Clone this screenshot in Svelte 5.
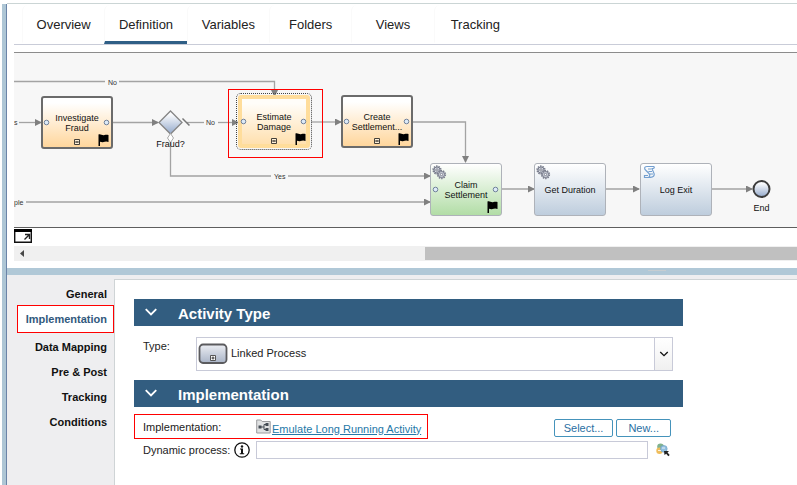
<script>
  const tabs = ['Overview', 'Definition', 'Variables', 'Folders', 'Views', 'Tracking'];
  const sections = ['General', 'Implementation', 'Data Mapping', 'Pre & Post', 'Tracking', 'Conditions'];

  let activeTab = $state('Definition');
  let activeSection = $state('Implementation');
  let dynamicProcess = $state('');

  // Positions are relative to the top left corner of the canvas.
  const nodes = [
    { x: 27, y: 43, kind: 'task', lines: ['Investigate', 'Fraud'], ports: true, sub: true, flag: true },
    { x: 224, y: 42, kind: 'task selected', lines: ['Estimate', 'Damage'], ports: true, sub: true, flag: true },
    { x: 327, y: 42, kind: 'task', lines: ['Create', 'Settlement...'], ports: true, sub: true, flag: true },
    { x: 416, y: 110, kind: 'claim', lines: ['Claim', 'Settlement'], ports: true, icon: 'gears', flag: true },
    { x: 520, y: 110, kind: 'system', lines: ['Get Duration'], icon: 'gears' },
    { x: 626, y: 110, kind: 'system', lines: ['Log Exit'], icon: 'script' }
  ];
</script>

{#snippet chevron(size)}
  <svg class="chevron" width={size} height={size} viewBox="0 0 12 12" aria-hidden="true">
    <path d="M1.500 3.500 6 8l4.500-4.500" fill="none" stroke="currentColor" stroke-width="1.600" />
  </svg>
{/snippet}

<div class="app">
  <div class="rail"></div>
  <div class="main">
    <div class="upper">
      <div class="tabstrip">
        <div class="tabs" role="tablist">
          {#each tabs as tab}
            <button class="tab" class:active={activeTab === tab} role="tab" aria-selected={activeTab === tab} onclick={() => (activeTab = tab)}>{tab}</button>
          {/each}
        </div>
      </div>

      <div class="canvas">
        <svg class="links" width="783" height="174" viewBox="14 53 783 174">
          <defs>
            <linearGradient id="steel" x1="0" y1="0" x2="0" y2="1">
              <stop offset="0.150" stop-color="#fafbfd" />
              <stop offset="1" stop-color="#93a9cb" />
            </linearGradient>
            <marker id="tip" viewBox="0 0 7 7" refX="6" refY="3.500" markerWidth="7" markerHeight="7" markerUnits="userSpaceOnUse" orient="auto">
              <path d="M0 0 7 3.500 0 7z" fill="#808080" />
            </marker>
          </defs>
          <g fill="none" stroke="#a3a3a3" stroke-width="1.300">
            <path d="M14 81.500H105" />
            <path d="M119 81.500H274.500V96" marker-end="url(#tip)" />
            <path d="M19 122.500H41" marker-end="url(#tip)" />
            <path d="M112 122.500H158" marker-end="url(#tip)" />
            <path d="M187 122.500H204" />
            <path d="M218 122.500H238" marker-end="url(#tip)" />
            <path d="M311 122H341" marker-end="url(#tip)" />
            <path d="M412 122H465.500V162" marker-end="url(#tip)" />
            <path d="M170.500 142V176H271" />
            <path d="M288 176H430" marker-end="url(#tip)" />
            <path d="M26 202H430" marker-end="url(#tip)" />
            <path d="M501 189H534" marker-end="url(#tip)" />
            <path d="M605 189H639" marker-end="url(#tip)" />
            <path d="M711 189H752" marker-end="url(#tip)" />
          </g>
          <path d="M182.500 118.500 189.500 125.500" stroke="#777" stroke-width="1.500" />
          <path d="M170.500 111 182 122.500 170.500 134 159 122.500z" fill="url(#steel)" stroke="#858585" stroke-width="1.300" />
          <path d="M170.500 133.500 173.500 138 170.500 142.500 167.500 138z" fill="#fff" stroke="#aaa" />
          <circle cx="761.500" cy="189" r="8" fill="url(#steel)" stroke="#3c3c3c" stroke-width="2" />
          <g class="small">
            <text x="108" y="85">No</text>
            <text x="206" y="125">No</text>
            <text x="274" y="179">Yes</text>
            <text x="14" y="205">ple</text>
            <text x="14" y="125">s</text>
          </g>
          <g class="caption">
            <text x="170.500" y="147">Fraud?</text>
            <text x="761.500" y="211">End</text>
          </g>
        </svg>

        {#each nodes as node}
          <div class="node {node.kind}" style="left: {node.x}px; top: {node.y}px">
            <span class="name">{#each node.lines as line}<span>{line}</span>{/each}</span>
            <svg class="marks" width="71" height="53" viewBox="0 0 71 53" aria-hidden="true">
              {#if node.ports}
                <circle cx="5.500" cy="26.500" r="2.300" fill="#dceaf8" stroke="#71819b" />
                <circle cx="65.500" cy="26.500" r="2.300" fill="#dceaf8" stroke="#71819b" />
              {/if}
              {#if node.sub}
                <path d="M33.500 43.500h5v5h-5z" fill="#fff0d8" stroke="#45413a" />
                <path d="M34 46h4M36 45v2" stroke="#45413a" />
              {/if}
              {#if node.flag}
                <path d="M57.500 38.500c2-1 4 1.500 6 .5 1.500-.5 2.500-.5 4 0v7c-2-1-3.500-.5-5 0-1.500.5-2.500-.3-3.500-.3V50h-1.500z" fill="#000" />
              {/if}
              {#if node.icon === 'gears'}
                <g fill="#d5d9e2" stroke="#7a7e8d">
                  <circle cx="7" cy="7" r="3.700" stroke-dasharray="1.400 0.900" stroke-width="1.900" />
                  <circle cx="7" cy="7" r="3" />
                  <circle cx="7" cy="7" r="1.200" fill="#fff" />
                  <circle cx="11.500" cy="11.500" r="3.700" stroke-dasharray="1.400 0.900" stroke-width="1.900" />
                  <circle cx="11.500" cy="11.500" r="3" />
                  <circle cx="11.500" cy="11.500" r="1.200" fill="#fff" />
                </g>
              {/if}
              {#if node.icon === 'script'}
                <path d="M14 3.500H7C4 3.500 4 6 6 7.500l3 3c1.500 1.500.5 4-1 4H4.500v-2H8M14 3.500c1 2-1 2-2 2 0 2 3 4 2 7-.5 1.500-2 2-6 2M8 6h3M8.500 8.500H12M10 11h3" fill="none" stroke="#739fd0" stroke-width="1.200" />
              {/if}
            </svg>
          </div>
        {/each}
        <div class="highlight"></div>
      </div>

      <button class="expand" aria-label="Open diagram in a window">
        <svg width="18" height="14" viewBox="0 0 18 14" aria-hidden="true">
          <path d="M.7.700h16.600v12.600H.7z" fill="#fff" stroke="#111" stroke-width="1.400" />
          <path d="M0 0h18v3H0z" fill="#000" />
          <path d="M10.500 10.500 15 6M11 5.500h4.500V10" fill="none" stroke="#222" stroke-width="1.400" />
        </svg>
      </button>

      <div class="scrollbar">
        <svg width="15" height="15" viewBox="0 0 15 15" aria-hidden="true"><path d="M10 4v7L6 7.500z" fill="#484848" /></svg>
        <div class="thumb"></div>
      </div>
    </div>

    <div class="splitter"><span></span></div>

    <div class="lower">
      <nav class="side">
        {#each sections as section}
          <button class:current={activeSection === section} onclick={() => (activeSection = section)}>{section}</button>
        {/each}
      </nav>

      <div class="panel">
        <div class="form">
          <h2>{@render chevron(14)}Activity Type</h2>
          <div class="row type">
            <label for="type">Type:</label>
            <div class="combo">
              <svg class="typeicon" width="30" height="22" viewBox="0 0 30 22" aria-hidden="true">
                <defs>
                  <linearGradient id="pill" x1="0" y1="0" x2="0" y2="1">
                    <stop offset="0" stop-color="#eceef3" />
                    <stop offset="1" stop-color="#a9b4c7" />
                  </linearGradient>
                </defs>
                <rect x="1.500" y="1.500" width="27" height="18.500" rx="3.500" fill="url(#pill)" stroke="#5b5b5e" stroke-width="1.800" />
                <path d="M12.500 12.500h5v5h-5z" fill="#fff" stroke="#555" />
                <path d="M13.500 15h3M15 13.500v3" stroke="#333" />
              </svg>
              <select id="type"><option>Linked Process</option></select>
              <span class="drop">{@render chevron(10)}</span>
            </div>
          </div>

          <h2>{@render chevron(14)}Implementation</h2>
          <div class="row impl">
            <div class="marked">
              <span class="label">Implementation:</span>
              <svg width="15" height="15" viewBox="0 0 15 15" aria-hidden="true">
                <path d="M.7 1h4l1.500 1.500h8V14H.7z" fill="#e0e2e3" stroke="#9a9c9e" />
                <path d="M4 8h4M11 5.500H8v5h3" fill="none" stroke="#444c55" />
                <path d="M2.500 6.500h3v3h-3zM9.500 4h3v3h-3zM9.500 9h3v3h-3z" fill="#444c55" />
              </svg>
              <a href="#activity">Emulate Long Running Activity</a>
            </div>
            <div class="actions">
              <button>Select...</button>
              <button>New...</button>
            </div>
          </div>

          <div class="row dynamic">
            <label for="dynamic">Dynamic process:</label>
            <svg width="16" height="16" viewBox="0 0 16 16" aria-hidden="true">
              <circle cx="8" cy="8" r="7.200" fill="#fff" stroke="#111" stroke-width="1.300" />
              <circle cx="8" cy="4.500" r="1.200" fill="#111" />
              <path d="M6 6.500h3v4.700h1.200v1H5.800v-1H7V7.500H6z" fill="#111" />
            </svg>
            <input id="dynamic" type="text" bind:value={dynamicProcess} />
            <button class="pick" aria-label="Pick a value">
              <svg width="14" height="14" viewBox="0 0 14 14" aria-hidden="true">
                <circle cx="4.500" cy="3.800" r="3.300" fill="#80b28e" />
                <circle cx="3.500" cy="7.800" r="3.200" fill="#efbd5b" />
                <circle cx="7.800" cy="5.800" r="3.400" fill="#91bfdf" stroke="#6097bd" stroke-width=".5" />
                <path d="M2 7.500h3M6 5h3" stroke="#fff" stroke-width=".8" />
                <path d="M8 8h5l-1.500 1.500 2.200 2.500-1.400 1.300-2.100-2.500L8.500 12z" fill="#222" />
              </svg>
            </button>
          </div>
        </div>
      </div>
    </div>
  </div>
</div>

<style>
  :global(body) {
    background: #fff;
  }
  .app, .app * {
    box-sizing: border-box;
  }
  .app {
    display: flex;
    min-height: 100vh;
    padding: 3px 0 0 2px;
    font-family: "Liberation Sans", Arial, sans-serif;
    font-size: 11px;
    line-height: 14px;
    color: #222;
  }
  button, select, input {
    font: inherit;
    color: inherit;
    margin: 0;
    padding: 0;
    border: 0;
    background: none;
  }
  svg {
    display: block;
    flex: none;
  }
  .rail {
    flex: none;
    width: 5px;
    margin-top: 1px;
    background: #aec6d5;
    border-right: 1px solid #6b84a8;
  }
  .main {
    flex: 1;
    min-width: 0;
    display: flex;
    flex-direction: column;
    border-top: 1px solid #cbd5d5;
  }
  .upper {
    padding: 1px 0 7px 7px;
  }

  /* Tabs */
  .tabstrip {
    height: 40px;
    margin-bottom: 7px;
    padding-left: 8px;
    border-bottom: 1px solid #c9ccd8;
  }
  .tabs {
    display: grid;
    grid-template-columns: repeat(6, 1fr);
    width: 100%;
    max-width: 494px;
    height: 39px;
  }
  .tab {
    padding-top: 3px;
    font-size: 13px;
    border-left: 1px solid #fafafa;
    border-bottom: 3px solid transparent;
    border-radius: 6px 6px 0 0;
  }
  .tab.active {
    border-bottom-color: #2f5f86;
    border-bottom-left-radius: 0;
  }

  /* Diagram */
  .canvas {
    position: relative;
    height: 176px;
    overflow: hidden;
    background: #f7f7f7;
    border-top: 1px solid #8c8c8c;
    border-bottom: 1px solid #5e5e5e;
  }
  .links {
    position: absolute;
    left: 0;
    top: 0;
  }
  .small {
    font-size: 7px;
    fill: #333;
  }
  .caption {
    font-size: 9px;
    fill: #111;
    text-anchor: middle;
  }
  .node {
    position: absolute;
    width: 72px;
    height: 53px;
    display: flex;
    align-items: center;
    justify-content: center;
    border: 1px solid #aeb2b9;
    border-radius: 3px;
    font-size: 9px;
    line-height: 10px;
    color: #111;
    text-align: center;
  }
  .name {
    display: flex;
    flex-direction: column;
  }
  .marks {
    position: absolute;
    left: -1px;
    top: -1px;
  }
  .task {
    border: 2px solid #6b6b6b;
    background: linear-gradient(#fff 10%, #ffd69c);
  }
  .task .marks {
    left: -2px;
    top: -2px;
  }
  .selected {
    border: 4px solid #ffdd9b;
    outline: 1px dotted #444;
    outline-offset: 1px;
    background: linear-gradient(#fffdf9 10%, #ffe0af) padding-box;
  }
  .selected .marks {
    left: -4px;
    top: -4px;
  }
  .claim {
    background: linear-gradient(#fff, #b2dda6);
  }
  .system {
    background: linear-gradient(#fff, #becddd);
  }
  .highlight {
    position: absolute;
    left: 214px;
    top: 36px;
    width: 95px;
    height: 69px;
    border: 1px solid #f00;
  }
  .expand {
    display: block;
    margin: 1px 0 3px;
  }

  .scrollbar {
    display: flex;
    align-items: center;
    height: 15px;
    background: #f0f0f0;
  }
  .thumb {
    flex: 1;
    height: 13px;
    margin-left: 396px;
    background: #c0c0c0;
  }
  .splitter {
    display: flex;
    justify-content: center;
    align-items: flex-start;
    height: 7px;
    padding: 2px 0 0 510px;
    background: #b0c8d7;
  }
  .splitter span {
    width: 18px;
    height: 1px;
    background: #c6cdd1;
  }

  /* Properties */
  .lower {
    flex: 1;
    display: flex;
    background: #eeeef0;
  }
  .side {
    flex: none;
    width: 107px;
    padding: 6px 0 0 10px;
    display: flex;
    flex-direction: column;
  }
  .side button {
    height: 25px;
    padding-right: 7px;
    text-align: right;
    font-weight: bold;
    color: #111;
  }
  .side .current {
    height: 28px;
    margin: -1px 0 1px;
    padding-right: 6px;
    color: #31597d;
    background: #fff;
    border: 1px solid #f00;
  }
  .panel {
    flex: 1;
    margin-top: 4px;
    padding: 19px 19px 0;
    background: #fff;
    border-top: 1px solid #cfd4d6;
    border-left: 1px solid #cfd4d6;
  }
  .form {
    max-width: 549px;
  }
  h2 {
    display: flex;
    align-items: center;
    gap: 20px;
    height: 27px;
    margin: 0;
    padding: 3px 0 0 10px;
    font-size: 15px;
    line-height: 20px;
    color: #fff;
    background: #325d80;
  }
  h2 .chevron {
    margin-top: -4px;
  }
  .row {
    display: flex;
    align-items: center;
  }
  .type {
    align-items: flex-start;
    padding: 11px 10px 9px 9px;
  }
  .type label {
    width: 53px;
    padding-top: 2px;
  }
  .combo {
    position: relative;
    flex: 1;
    height: 34px;
  }
  .combo select {
    display: block;
    width: 100%;
    height: 34px;
    padding: 0 22px 2px 34px;
    appearance: none;
    border: 1px solid #c8cad8;
    border-radius: 0;
    background: #fff;
  }
  .typeicon {
    position: absolute;
    left: 2px;
    top: 6px;
  }
  .drop {
    position: absolute;
    right: 1px;
    top: 1px;
    width: 18px;
    height: 32px;
    display: flex;
    align-items: center;
    justify-content: center;
    color: #111;
    border-left: 1px solid #c8cad8;
    background: linear-gradient(#fff, #f0f0f0);
    pointer-events: none;
  }
  .impl {
    justify-content: space-between;
    padding: 7px 12px 2px 0;
  }
  .marked {
    display: flex;
    align-items: center;
    width: 294px;
    height: 25px;
    padding-left: 8px;
    border: 1px solid #f00;
  }
  .label {
    width: 113px;
  }
  a {
    padding-top: 4px;
    color: #2478a8;
    text-decoration: underline;
  }
  .marked svg {
    margin-right: 1px;
  }
  .actions {
    display: flex;
    gap: 3px;
    padding-top: 2px;
  }
  .actions button {
    height: 18px;
    padding: 0 9px;
    color: #2a6fa3;
    background: #fff;
    border: 1px solid #4593bb;
    border-radius: 2px;
  }
  .actions button + button {
    padding: 0 11px;
  }
  .dynamic {
    padding: 0 13px 0 9px;
  }
  .dynamic label {
    width: 91px;
  }
  .dynamic input {
    flex: 1;
    min-width: 0;
    height: 18px;
    margin: 0 8px 0 6px;
    padding: 0 4px;
    border: 1px solid #c8cad8;
    background: #fff;
  }
</style>
